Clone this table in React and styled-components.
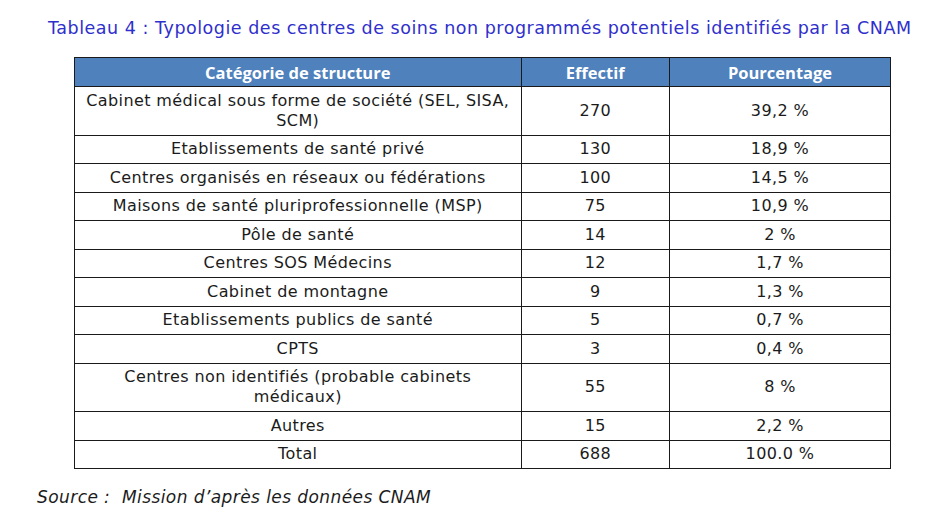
import React from 'react';
import styled, { createGlobalStyle } from 'styled-components';

const GlobalStyle = createGlobalStyle`
  html, body {
    margin: 0;
    padding: 0;
    background: #ffffff;
  }
  body {
    font-family: "DejaVu Sans", "Open Sans", sans-serif;
    color: #1b1b1b;
  }
`;

const Page = styled.div`
  width: 942px;
  height: 515px;
  padding-top: 16px;
  box-sizing: border-box;
  display: flex;
  flex-direction: column;
`;

const Title = styled.h2`
  margin: 0 0 0 48px;
  font-size: 17.5px;
  font-weight: 400;
  letter-spacing: 0.52px;
  line-height: 24px;
  color: #2f2fcc;
  white-space: nowrap;
`;

const Table = styled.table`
  margin: 17px 0 0 74px;
  width: 816px;
  border-collapse: collapse;
  table-layout: fixed;
  font-size: 16px;
  letter-spacing: 0.4px;
`;

const Col = styled.col`
  width: ${(p) => p.$w}px;
`;

const HeadCell = styled.th`
  background: #4f81bd;
  color: #ffffff;
  font-family: "Open Sans", "Liberation Sans", sans-serif;
  font-size: 16.5px;
  font-weight: 700;
  letter-spacing: 0;
  height: 28px;
  padding: 0 6px;
  border: 1px solid #1a1a1a;
  text-align: center;
`;

const Cell = styled.td`
  border: 1px solid #1a1a1a;
  padding: 3.75px 6px;
  text-align: center;
  line-height: 20px;
  white-space: pre-line;
`;

const Source = styled.p`
  margin: 18px 0 0 37px;
  font-size: 17px;
  font-style: italic;
  letter-spacing: 0.42px;
  color: #1b1b1b;
  white-space: pre;
`;

const rows = [
  ['Cabinet médical sous forme de société (SEL, SISA,\nSCM)', '270', '39,2 %'],
  ['Etablissements de santé privé', '130', '18,9 %'],
  ['Centres organisés en réseaux ou fédérations', '100', '14,5 %'],
  ['Maisons de santé pluriprofessionnelle (MSP)', '75', '10,9 %'],
  ['Pôle de santé', '14', '2 %'],
  ['Centres SOS Médecins', '12', '1,7 %'],
  ['Cabinet de montagne', '9', '1,3 %'],
  ['Etablissements publics de santé', '5', '0,7 %'],
  ['CPTS', '3', '0,4 %'],
  ['Centres non identifiés (probable cabinets\nmédicaux)', '55', '8 %'],
  ['Autres', '15', '2,2 %'],
  ['Total', '688', '100.0 %'],
];

export default function App() {
  return (
    <>
      <GlobalStyle />
      <Page>
        <Title>Tableau 4 : Typologie des centres de soins non programmés potentiels identifiés par la CNAM</Title>
        <Table>
          <colgroup>
            <Col $w={446.5} />
            <Col $w={148.5} />
            <Col $w={221} />
          </colgroup>
          <thead>
            <tr>
              <HeadCell>Catégorie de structure</HeadCell>
              <HeadCell>Effectif</HeadCell>
              <HeadCell>Pourcentage</HeadCell>
            </tr>
          </thead>
          <tbody>
            {rows.map(([label, count, pct]) => (
              <tr key={label}>
                <Cell>{label}</Cell>
                <Cell>{count}</Cell>
                <Cell>{pct}</Cell>
              </tr>
            ))}
          </tbody>
        </Table>
        <Source>Source :  Mission d’après les données CNAM</Source>
      </Page>
    </>
  );
}
